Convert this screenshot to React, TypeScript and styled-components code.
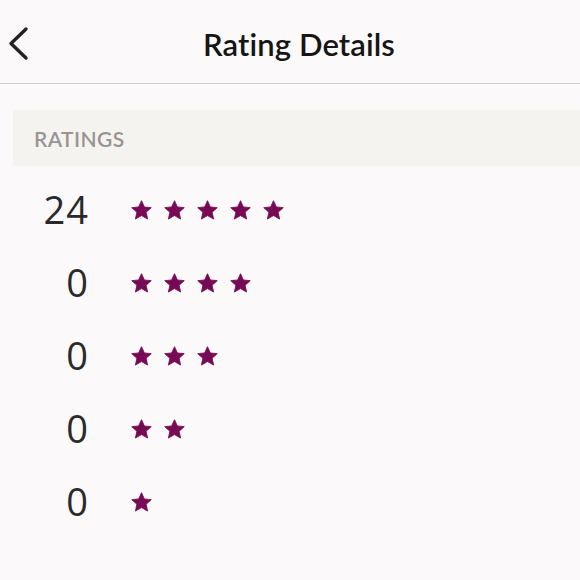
import React from "react";
import styled, { createGlobalStyle } from "styled-components";

const GlobalStyle = createGlobalStyle`
  html, body {
    margin: 0;
    padding: 0;
    background: #fcf9fa;
  }
  body {
    font-family: "Lato", "Open Sans", sans-serif;
  }
`;

const Page = styled.div`
  width: 580px;
  min-height: 580px;
  background: #fcf9fa;
`;

const Header = styled.header`
  display: grid;
  grid-template-columns: 48px 1fr 30px;
  align-items: center;
  height: 84px;
  padding-top: 4px;
  border-bottom: 1px solid #cfcccc;
  box-sizing: border-box;
`;

const BackButton = styled.button`
  display: flex;
  align-items: center;
  justify-content: flex-start;
  padding: 0 0 0 7px;
  border: none;
  background: none;
  height: 40px;
  cursor: pointer;
`;

const Title = styled.h1`
  margin: 0;
  text-align: center;
  font-family: "Lato", sans-serif;
  font-weight: 600;
  font-size: 31px;
  color: #151515;
  letter-spacing: 0.1px;
`;

const SectionBar = styled.div`
  display: flex;
  align-items: center;
  margin: 26px 0 0 13px;
  height: 56px;
  padding-left: 21px;
  background: #f5f3f0;
  font-family: "Lato", sans-serif;
  font-size: 21px;
  font-weight: 600;
  color: #9a9490;
  letter-spacing: 0.4px;
`;

const List = styled.div`
  display: flex;
  flex-direction: column;
  padding-top: 7px;
`;

const Row = styled.div`
  display: flex;
  align-items: center;
  height: 72.8px;
  gap: 43px;
  padding-left: 13px;
`;

const Count = styled.span`
  width: 76px;
  text-align: right;
  font-family: "Open Sans", sans-serif;
  font-size: 38px;
  font-weight: 400;
  letter-spacing: 1px;
  color: #2a2a2a;
  line-height: 1;
  margin-right: -1px;
`;

const Stars = styled.div`
  display: flex;
  gap: 12px;
  align-items: center;
  margin-top: 2px;
`;

const Star = () => (
  <svg width="21" height="20" viewBox="0 0 24 23">
    <path
      d="M12 0.8l3.3 7.2 7.9 0.8-5.9 5.3 1.7 7.8L12 17.9l-7 4 1.7-7.8L0.8 8.8l7.9-0.8z"
      fill="#770a54"
      stroke="#770a54"
      strokeWidth="1"
      strokeLinejoin="round"
    />
  </svg>
);

const ratings = [
  { stars: 5, count: 24 },
  { stars: 4, count: 0 },
  { stars: 3, count: 0 },
  { stars: 2, count: 0 },
  { stars: 1, count: 0 },
];

export default function App() {
  return (
    <Page>
      <GlobalStyle />
      <Header>
        <BackButton aria-label="Back">
          <svg width="24" height="36" viewBox="0 0 24 36">
            <path
              d="M19 3L4 17.5L19 32"
              fill="none"
              stroke="#222"
              strokeWidth="3.4"
              strokeLinecap="round"
              strokeLinejoin="round"
            />
          </svg>
        </BackButton>
        <Title>Rating Details</Title>
        <span />
      </Header>
      <SectionBar>RATINGS</SectionBar>
      <List>
        {ratings.map((r) => (
          <Row key={r.stars}>
            <Count>{r.count}</Count>
            <Stars>
              {Array.from({ length: r.stars }).map((_, i) => (
                <Star key={i} />
              ))}
            </Stars>
          </Row>
        ))}
      </List>
    </Page>
  );
}
